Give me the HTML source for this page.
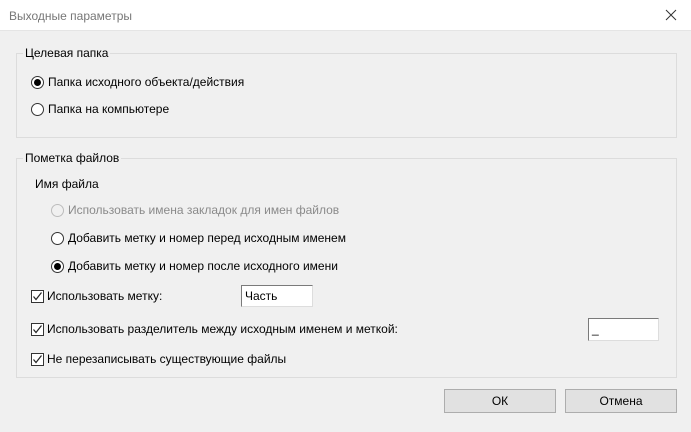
<!DOCTYPE html>
<html><head><meta charset="utf-8"><style>
*{margin:0;padding:0;box-sizing:border-box}
body{width:691px;height:432px;background:#f0f0f0;font-family:"Liberation Sans",sans-serif;font-size:12px;color:#000;position:relative;overflow:hidden}
.a{position:absolute;white-space:nowrap}
.title{left:0;top:0;width:691px;height:31px;background:#fff;border-bottom:1px solid #e5e5e5}
.grp{position:absolute;border:1px solid #dcdcdc}
.lg{background:#f0f0f0;padding:0 2px}
.rb{position:absolute;width:13px;height:13px;border:1px solid #333;border-radius:50%;background:#fff}
.rb.on::after{content:"";position:absolute;left:2px;top:2px;width:7px;height:7px;border-radius:50%;background:#000}
.rb.dis{border-color:#bcbcbc;background:#f0f0f0}
.cb{position:absolute;width:13px;height:13px;border:1px solid #333;background:#fff}
.inp{position:absolute;background:#fff;border:1px solid #7a7a7a;border-right-color:#ddd;border-bottom-color:#ddd;padding:3px 0 0 3px}
.btn{position:absolute;width:112px;height:24px;background:#e1e1e1;border:1px solid #adadad;text-align:center;line-height:22px}
</style></head><body>
<div class="a title"></div>
<div class="a" style="left:9px;top:9px;color:#777;font-size:12px">Выходные параметры</div>
<svg class="a" style="left:665px;top:9px" width="12" height="12"><path d="M1 1L11 11M11 1L1 11" stroke="#333" stroke-width="1"/></svg>

<div class="grp" style="left:16px;top:53px;width:661px;height:85px"></div>
<div class="a lg" style="left:23px;top:46px">Целевая папка</div>
<div class="rb on" style="left:31px;top:76px"></div>
<div class="a" style="left:48px;top:75px">Папка исходного объекта/действия</div>
<div class="rb" style="left:31px;top:103px"></div>
<div class="a" style="left:48px;top:102px">Папка на компьютере</div>

<div class="grp" style="left:16px;top:158px;width:661px;height:220px"></div>
<div class="a lg" style="left:23px;top:151px">Пометка файлов</div>
<div class="a" style="left:35px;top:177px">Имя файла</div>
<div class="rb dis" style="left:51px;top:204px"></div>
<div class="a" style="left:68px;top:203px;color:#8a8a8a">Использовать имена закладок для имен файлов</div>
<div class="rb" style="left:51px;top:232px"></div>
<div class="a" style="left:68px;top:231px">Добавить метку и номер перед исходным именем</div>
<div class="rb on" style="left:51px;top:260px"></div>
<div class="a" style="left:68px;top:259px">Добавить метку и номер после исходного имени</div>

<div class="cb" style="left:31px;top:290px"><svg width="11" height="11" style="position:absolute;left:0;top:0"><path d="M1.5 5.5 L4 8.5 L9.5 1.5" stroke="#222" fill="none" stroke-width="1.2"/></svg></div>
<div class="a" style="left:47px;top:289px">Использовать метку:</div>
<div class="inp" style="left:241px;top:285px;width:72px;height:22px">Часть</div>

<div class="cb" style="left:31px;top:323px"><svg width="11" height="11" style="position:absolute;left:0;top:0"><path d="M1.5 5.5 L4 8.5 L9.5 1.5" stroke="#222" fill="none" stroke-width="1.2"/></svg></div>
<div class="a" style="left:47px;top:322px">Использовать разделитель между исходным именем и меткой:</div>
<div class="inp" style="left:588px;top:318px;width:71px;height:23px">_</div>

<div class="cb" style="left:31px;top:353px"><svg width="11" height="11" style="position:absolute;left:0;top:0"><path d="M1.5 5.5 L4 8.5 L9.5 1.5" stroke="#222" fill="none" stroke-width="1.2"/></svg></div>
<div class="a" style="left:47px;top:352px">Не перезаписывать существующие файлы</div>

<div class="btn" style="left:444px;top:389px">ОК</div>
<div class="btn" style="left:565px;top:389px">Отмена</div>
</body></html>
